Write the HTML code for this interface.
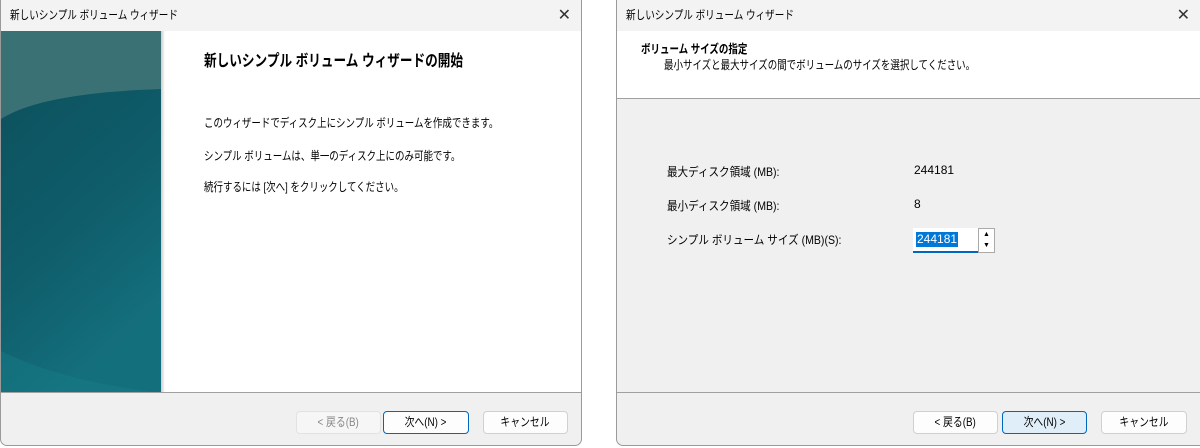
<!DOCTYPE html>
<html><head><meta charset="utf-8"><style>
body{margin:0;width:1200px;height:448px;background:#fff;position:relative;overflow:hidden;font-family:"Liberation Sans","Noto Sans CJK JP",sans-serif;font-size:12px;color:#000}
.win{position:absolute;top:0;height:446px;background:#f0f0f0;border:1px solid #9a9a9a;border-top:none;border-radius:0 0 7px 7px;box-sizing:border-box;overflow:hidden}
.title{position:absolute;left:0;right:0;top:0;height:31px;background:#f3f3f3}
.tt{position:absolute;left:9px;top:0;line-height:31px;font-size:12px;transform:scaleX(0.8);transform-origin:left;white-space:nowrap}
.x{position:absolute;right:10px;top:0;line-height:31px;font-size:16px;color:#333}
.btn{position:absolute;top:411px;height:23px;box-sizing:border-box;border:1px solid #d0d0d0;border-radius:4px;background:#fdfdfd;text-align:center;line-height:21px;font-size:12px}
.btn span{display:inline-block;transform:scaleX(0.82)}
.abs{position:absolute;white-space:nowrap}
.t{transform:scaleX(0.79);transform-origin:left}
.l{transform:scaleX(0.88);transform-origin:left}
.div{position:absolute;left:0;right:0;top:392px;height:1px;background:#a0a0a0}
</style></head><body>
<div class="win" style="left:0;width:582px;">
 <div class="title"><span class="tt">新しいシンプル ボリューム ウィザード</span><span class="x">✕</span></div>
 <svg class="abs" style="left:0;top:31px" width="160" height="362">
  <defs><linearGradient id="g" x1="0" y1="0" x2="0.4" y2="1"><stop offset="0" stop-color="#0c4f5a"/><stop offset="0.6" stop-color="#0f5c6a"/><stop offset="1" stop-color="#146f7c"/></linearGradient></defs>
  <rect width="160" height="362" fill="#3a7175"/>
  <clipPath id="c"><path d="M0 88 Q40 62 160 58 L160 362 L0 362Z"/></clipPath>
  <rect width="160" height="362" fill="url(#g)" clip-path="url(#c)"/>
  <path d="M0 320 Q60 350 160 362 L0 362Z" fill="#16808a" opacity="0.4"/>
 </svg>
 <div class="abs" style="left:160px;top:31px;width:4px;height:362px;background:linear-gradient(90deg,#ccc,#fff)"></div>
 <div class="abs" style="left:164px;top:31px;width:418px;height:361px;background:#fff"></div>
 <div class="abs t" style="left:203px;top:47px;font-size:16px;font-weight:bold">新しいシンプル ボリューム ウィザードの開始</div>
 <div class="abs t" style="left:203px;top:114px">このウィザードでディスク上にシンプル ボリュームを作成できます。</div>
 <div class="abs t" style="left:203px;top:147px">シンプル ボリュームは、単一のディスク上にのみ可能です。</div>
 <div class="abs t" style="left:203px;top:178px">続行するには [次へ] をクリックしてください。</div>
 <div class="div"></div>
 <div class="btn" style="left:295px;width:85px;color:#888;background:#f6f6f6;border-color:#e2e2e2"><span>&lt; 戻る(B)</span></div>
 <div class="btn" style="left:382px;width:86px;border-color:#0067c0"><span>次へ(N) &gt;</span></div>
 <div class="btn" style="left:482px;width:85px"><span>キャンセル</span></div>
</div>
<div class="win" style="left:616px;width:584px;border-right:none;border-radius:0 0 0 7px">
 <div class="title"><span class="tt">新しいシンプル ボリューム ウィザード</span><span class="x">✕</span></div>
 <div class="abs" style="left:0;top:31px;width:584px;height:67px;background:#fff;border-bottom:1px solid #a0a0a0"></div>
 <div class="abs t" style="left:24px;top:40px;font-weight:bold">ボリューム サイズの指定</div>
 <div class="abs t" style="left:47px;top:56px">最小サイズと最大サイズの間でボリュームのサイズを選択してください。</div>
 <div class="abs l" style="left:50px;top:163px">最大ディスク領域 (MB):</div>
 <div class="abs" style="left:297px;top:163px">244181</div>
 <div class="abs l" style="left:50px;top:197px">最小ディスク領域 (MB):</div>
 <div class="abs" style="left:297px;top:197px">8</div>
 <div class="abs l" style="left:50px;top:231px">シンプル ボリューム サイズ (MB)(S):</div>
 <div class="abs" style="left:296px;top:228px;width:65px;height:25px;background:#fff;border-bottom:2px solid #0067c0;box-sizing:border-box"></div>
 <div class="abs" style="left:299px;top:232px;background:#0078d7;color:#fff;padding:0 1px;line-height:15px">244181</div>
 <div class="abs" style="left:361px;top:228px;width:17px;height:25px;border:1px solid #aaa;box-sizing:border-box;background:#fff;font-size:7px;text-align:center;line-height:11px">▲<br>▼</div>
 <div class="div"></div>
 <div class="btn" style="left:296px;width:85px"><span>&lt; 戻る(B)</span></div>
 <div class="btn" style="left:385px;width:85px;border-color:#0067c0;background:#e0eef9"><span>次へ(N) &gt;</span></div>
 <div class="btn" style="left:484px;width:86px"><span>キャンセル</span></div>
</div>
</body></html>
